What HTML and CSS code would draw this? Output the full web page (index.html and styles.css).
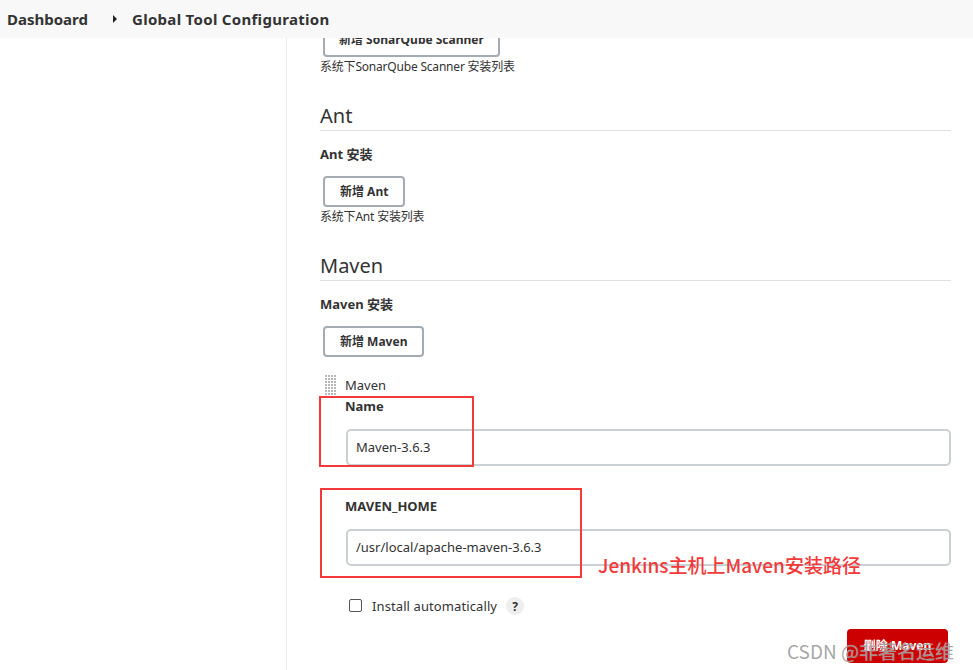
FILE: index.html
```html
<!DOCTYPE html>
<html lang="zh-CN">
<head>
<meta charset="utf-8">
<title>Global Tool Configuration</title>
<link rel="stylesheet" href="styles.css">
</head>
<body>
<div class="page">
  <header class="crumbs">
    <span class="crumb">Dashboard</span>
    <span class="sep"></span>
    <span class="crumb">Global Tool Configuration</span>
  </header>
  <div class="layout">
    <aside class="sidebar"></aside>
    <main class="main">
      <div class="cut">
        <button class="btn">新增 SonarQube Scanner</button>
      </div>
      <div class="desc">系统下SonarQube Scanner 安装列表</div>

      <h2 class="section-title">Ant</h2>
      <div class="label">Ant 安装</div>
      <button class="btn btn-add">新增 Ant</button>
      <div class="desc">系统下Ant 安装列表</div>

      <h2 class="section-title">Maven</h2>
      <div class="label">Maven 安装</div>
      <button class="btn btn-add">新增 Maven</button>

      <div class="repeated">
        <div class="handle"></div>
        <div class="repeated-body">
          <div class="legend">Maven</div>
          <div class="label field-label">Name</div>
          <div class="input">Maven-3.6.3</div>
          <div class="label field-label field-gap">MAVEN_HOME</div>
          <div class="input">/usr/local/apache-maven-3.6.3</div>
        </div>
      </div>

      <div class="check-row">
        <span class="checkbox"></span>
        <span class="check-label">Install automatically</span>
        <span class="help">?</span>
      </div>

      <div class="actions">
        <button class="btn-danger">删除 Maven</button>
      </div>

      <div class="mark mark-name"></div>
      <div class="mark mark-home"></div>
      <div class="note">Jenkins主机上Maven安装路径</div>
    </main>
  </div>
  <div class="watermark">CSDN @非著名运维</div>
</div>
</body>
</html>
```

FILE: styles.css
```css
* { box-sizing: border-box; }
html, body { margin: 0; padding: 0; background: #fff; }
body {
  font-family: "Noto Sans", "Noto Sans CJK SC", sans-serif;
  color: #333;
  width: 973px;
  height: 670px;
  overflow: hidden;
}
.page { position: relative; width: 973px; height: 670px; overflow: hidden; }

.crumbs {
  height: 38px;
  background: #f8f8f8;
  display: flex;
  align-items: center;
  padding-left: 7px;
  font-size: 15px;
  font-weight: 700;
  color: #333;
}
.crumb { line-height: 20px; }
.crumb + .sep + .crumb { letter-spacing: 0.3px; }
.sep {
  width: 0; height: 0;
  border-top: 4px solid transparent;
  border-bottom: 4px solid transparent;
  border-left: 4px solid #222;
  margin: 0 15px 0 25px;
}

.layout { display: flex; height: 632px; }
.sidebar { width: 287px; flex: none; border-right: 1px solid #ececec; }
.main {
  position: relative;
  flex: 1;
  padding-left: 33px;
  padding-right: 22px;
}

.cut {
  height: 19px;
  overflow: hidden;
  display: flex;
  align-items: flex-end;
}

.btn {
  font-family: inherit;
  font-size: 12px;
  font-weight: 700;
  color: #333;
  background: #fff;
  border: 2px solid #a3acb3;
  border-radius: 4px;
  line-height: 17px;
  padding: 5px 15px;
  margin-left: 3px;
  display: block;
}
.cut .btn { padding: 5px 14px 7px; }
.btn-add { margin-top: 13px; }

.desc { font-size: 12px; line-height: 14px; margin-top: 3px; color: #333; letter-spacing: -0.2px; }

.section-title {
  font-size: 20px;
  font-weight: 400;
  line-height: 24px;
  margin: 30px 0 0;
  padding-bottom: 2px;
  border-bottom: 1px solid #e0e0e0;
  color: #333;
}

.label { font-size: 13px; font-weight: 700; line-height: 18px; margin-top: 14px; }

.repeated { display: flex; margin-top: 18px; }
.handle {
  width: 12px;
  height: 21px;
  margin-left: 5px;
  margin-right: 8px;
  background-image: radial-gradient(circle at 1px 1px, #b8b8b8 0.75px, transparent 0.8px);
  background-size: 3px 3px;
  flex: none;
}
.repeated-body { flex: 1; }
.legend { font-size: 13px; line-height: 16px; margin-top: 2px; color: #333; }
.field-label { margin-top: 5px; line-height: 16px; }
.field-gap { margin-top: 32px; }

.input {
  margin-top: 15px;
  margin-left: 1px;
  height: 37px;
  border: 2px solid #c9d1d4;
  border-radius: 5px;
  font-size: 13px;
  line-height: 33px;
  padding-left: 8px;
  color: #333;
}

.check-row {
  display: flex;
  align-items: center;
  margin-top: 31px;
  margin-left: 29px;
  height: 18px;
}
.checkbox {
  width: 13px; height: 13px;
  border: 1px solid #555;
  border-radius: 2px;
  background: #fff;
  margin-top: -2px;
}
.check-label { font-size: 13px; margin-left: 10px; color: #333; letter-spacing: 0.1px; }
.help {
  width: 18px; height: 18px;
  border-radius: 50%;
  background: #eee;
  font-size: 12px;
  font-weight: 700;
  display: flex; align-items: center; justify-content: center;
  margin-left: 9px;
  color: #333;
}

.actions { display: flex; justify-content: flex-end; margin-top: 14px; margin-right: 3px; }
.btn-danger {
  font-family: inherit;
  width: 101px;
  height: 34px;
  background: #cc0000;
  color: #fff;
  border: none;
  border-radius: 4px;
  font-size: 12px;
  font-weight: 700;
  padding: 0;
  line-height: 34px;
}

.mark { position: absolute; border: 2px solid #f23a3a; pointer-events: none; }
.mark-name { left: 32px; top: 358px; width: 155px; height: 71px; }
.mark-home { left: 33px; top: 450px; width: 262px; height: 90px; }
.note {
  position: absolute;
  left: 311px;
  top: 514px;
  font-family: "Noto Sans CJK SC", sans-serif;
  font-size: 19px;
  font-weight: 500;
  line-height: 26px;
  color: #f23a3a;
}

.watermark {
  position: absolute;
  left: 787px;
  top: 637px;
  font-family: "Noto Sans CJK SC", sans-serif;
  font-size: 19px;
  line-height: 28px;
  color: rgba(150, 150, 150, 0.85);
  text-shadow: 0 0 1px rgba(255,255,255,0.6);
}
```
